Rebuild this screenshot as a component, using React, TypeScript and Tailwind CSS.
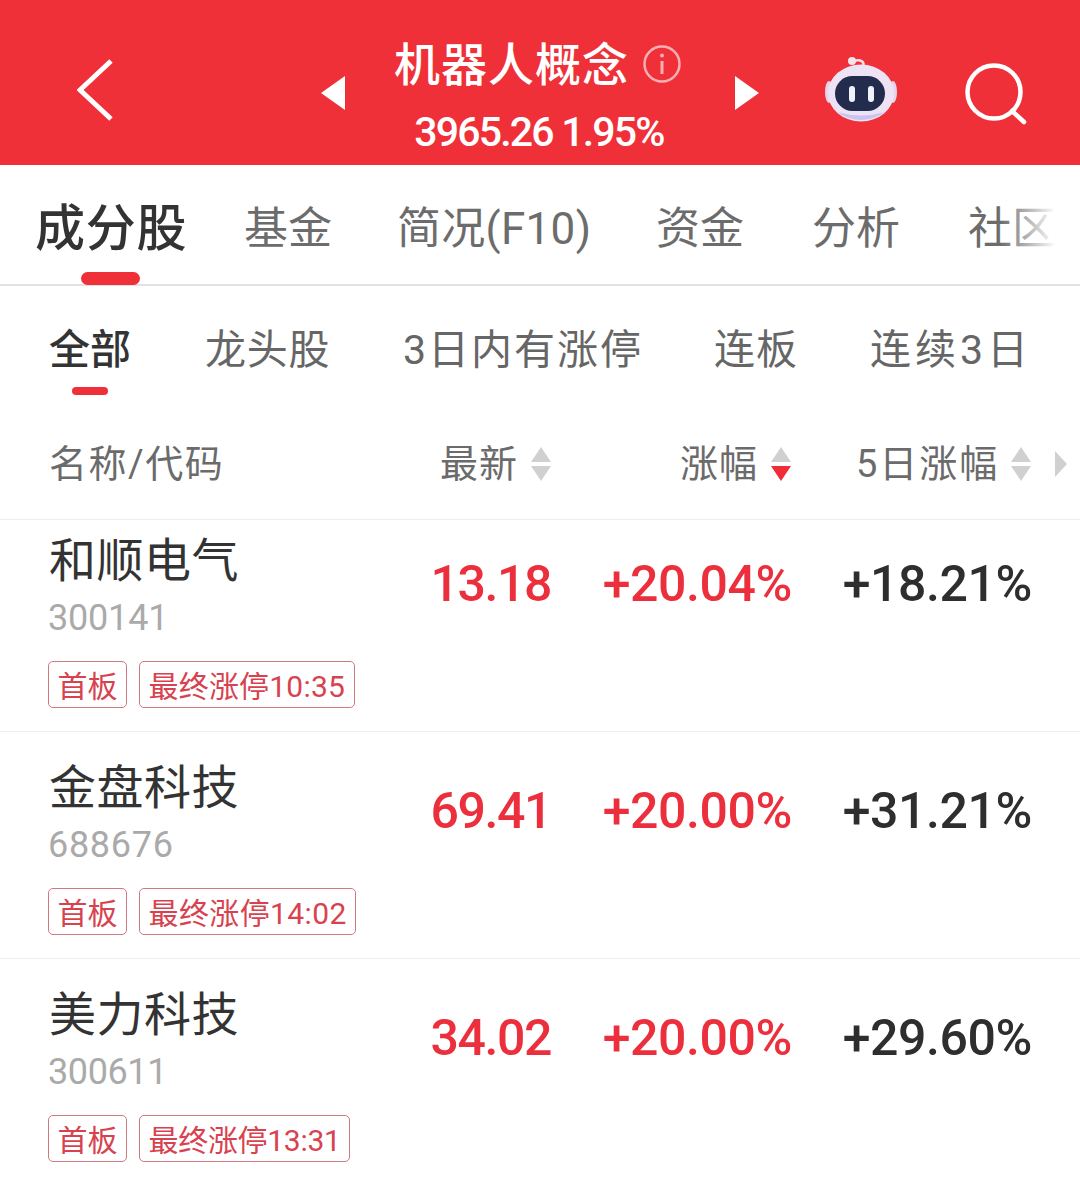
const font = "font-['Roboto','Noto_Sans_CJK_SC',sans-serif]";

const stocks = [
  { name: '和顺电气', code: '300141', codeClass: 'tracking-[-0.2px]', price: '13.18', change: '+20.04%', five: '+18.21%', limit: '最终涨停10:35', limitClass: 'tracking-[0.2px]', rowClass: 'h-[212px] pt-[13px]' },
  { name: '金盘科技', code: '688676', codeClass: 'tracking-[0.7px]', price: '69.41', change: '+20.00%', five: '+31.21%', limit: '最终涨停14:02', limitClass: 'tracking-[0.4px]', rowClass: 'h-[227px] pt-[28px]' },
  { name: '美力科技', code: '300611', codeClass: 'tracking-[-0.4px]', price: '34.02', change: '+20.00%', five: '+29.60%', limit: '最终涨停13:31', limitClass: 'tracking-[-0.3px]', rowClass: 'h-[219px] pt-[28px]' },
];

function SortCaret({ active = false }: { active?: boolean }) {
  return (
    <svg width="20" height="34" viewBox="0 0 20 34" className="shrink-0 block">
      <path d="M10 0 L20 15 L0 15 Z" fill="#d0d0d0" />
      <path d="M10 34 L20 19 L0 19 Z" fill={active ? '#f12b38' : '#d0d0d0'} />
    </svg>
  );
}

function Robot() {
  return (
    <svg width="72" height="66" viewBox="0 0 72 66" className="shrink-0 block">
      <path d="M29 5 C36 3 40 6 38 11" fill="none" stroke="#f3dce6" strokeWidth="2.5" />
      <circle cx="27" cy="5" r="4" fill="#f6e4ea" />
      <ellipse cx="4" cy="36" rx="4" ry="11" fill="#e8d4ea" />
      <ellipse cx="68" cy="36" rx="4" ry="11" fill="#e8d4ea" />
      <ellipse cx="36" cy="37" rx="33" ry="28.5" fill="#eee3f4" />
      <path d="M12 56 Q36 72 60 56 Q36 63 12 56 Z" fill="#c9c3f0" />
      <rect x="10" y="20" width="50" height="35" rx="17.5" fill="#232c4d" />
      <rect x="24" y="30" width="6" height="16" rx="3" fill="#eef3fb" />
      <rect x="43" y="30" width="6" height="16" rx="3" fill="#eef3fb" />
    </svg>
  );
}

export default function App() {
  return (
    <div className={`w-[1080px] h-[1177px] overflow-hidden bg-white ${font}`}>
      {/* Header */}
      <div className="h-[165px] bg-[#f03039] flex items-center pt-[18px] pl-[77px] text-white">
        <svg width="36" height="62" viewBox="0 0 36 62" fill="none" stroke="#fff" strokeWidth="5" className="shrink-0 mt-[-4px]">
          <path d="M34 2 L3 31 L34 60" />
        </svg>
        <div className="ml-[208px] w-0 h-0 border-y-[17px] border-y-transparent border-r-[24px] border-r-white mt-[2px]" />
        <div className="w-[390px] flex flex-col items-center mt-[12px]">
          <div className="flex items-center -ml-[4px] h-[60px] mt-[-4px]">
            <span className="text-[46px] leading-[60px] font-medium tracking-[1px]">机器人概念</span>
            <svg width="40" height="40" viewBox="0 0 40 40" fill="none" className="ml-[13px] mt-[-2px]">
              <circle cx="20" cy="20" r="17.5" stroke="#f8aeb3" strokeWidth="2.5" />
              <path d="M20 17 V30" stroke="#f8aeb3" strokeWidth="3" />
              <circle cx="20" cy="11.5" r="2" fill="#f8aeb3" />
            </svg>
          </div>
          <div className="text-[41px] leading-[50px] mt-[12px] mr-[2px] font-medium tracking-[-1.8px]">3965.26 1.95%</div>
        </div>
        <div className="w-0 h-0 border-y-[17px] border-y-transparent border-l-[24px] border-l-white mt-[2px]" />
        <div className="ml-[66px] mb-[6px]">
          <Robot />
        </div>
        <svg width="62" height="62" viewBox="0 0 62 62" fill="none" stroke="#fff" strokeWidth="4.5" className="ml-[68px] mt-[4px] shrink-0">
          <circle cx="29" cy="29" r="26.5" />
          <path d="M47 48 L59 59" strokeLinecap="round" />
        </svg>
      </div>

      {/* Tabs */}
      <div className="relative h-[121px] border-b-2 border-[#e2e2e2] flex items-center pl-[35px] pt-[9px] text-[44px] text-[#6c6c6c]">
        <span className="w-[153px] text-[50px] font-medium text-[#333] tracking-[0.7px] whitespace-nowrap">成分股</span>
        <span className="ml-[56px]">基金</span>
        <span className="ml-[65px] w-[194px] tracking-[0.3px] whitespace-nowrap">简况(F10)</span>
        <span className="ml-[65px]">资金</span>
        <span className="ml-[68px]">分析</span>
        <span className="ml-[68px] w-[88px] whitespace-nowrap">社区</span>
        <div className="absolute left-[1000px] top-[30px] w-[56px] h-[70px] bg-gradient-to-r from-transparent to-white" />
        <div className="absolute left-[81px] bottom-[-1px] w-[59px] h-[13px] rounded-full bg-[#f03039]" />
      </div>

      {/* Sub tabs */}
      <div className="relative h-[125px] flex items-center pl-[49px] pt-[5px] text-[41px] text-[#666]">
        <span className="font-medium text-[#333]">全部</span>
        <span className="ml-[74px] w-[125px] tracking-[0.7px] whitespace-nowrap">龙头股</span>
        <span className="ml-[73px] tracking-[2px]">3日内有涨停</span>
        <span className="ml-[71px] w-[84px] tracking-[1px] whitespace-nowrap">连板</span>
        <span className="ml-[72px] tracking-[4px]">连续3日</span>
        <div className="absolute left-[72px] top-[101px] w-[36px] h-[8px] rounded-full bg-[#f03039]" />
      </div>

      {/* Table head */}
      <div className="h-[109px] border-b border-[#eeeeee] pl-[49px] pb-[2px] flex items-center text-[38px] text-[#6b6b6b] bg-white">
        <span className="w-[391px] tracking-[1.5px] whitespace-nowrap">名称/代码</span>
        <span className="w-[77px] tracking-[1px] whitespace-nowrap">最新</span>
        <span className="ml-[14px]"><SortCaret /></span>
        <span className="ml-[129px] w-[76px] tracking-[1px] whitespace-nowrap">涨幅</span>
        <span className="ml-[15px]"><SortCaret active /></span>
        <span className="ml-[65px] w-[145px] tracking-[2px] whitespace-nowrap">5日涨幅</span>
        <span className="ml-[10px]"><SortCaret /></span>
        <svg width="12" height="26" viewBox="0 0 12 26" className="ml-[24px] shrink-0">
          <path d="M0 0 L12 13 L0 26 Z" fill="#d0d0d0" />
        </svg>
      </div>

      {/* Rows */}
      {stocks.map((s, i) => (
        <div
          key={s.code}
          className={`grid grid-cols-[1fr_170px_241px_240px] pl-[48px] pr-[48px] items-start ${s.rowClass} ${i < 2 ? 'border-b border-[#eeeeee]' : ''}`}
        >
          <div>
            <div className="pl-[1px] text-[47px] leading-[56px] text-[#333] tracking-[0.5px]">{s.name}</div>
            <div className={`mt-[4px] text-[36px] leading-[50px] text-[#aaaaaa] ${s.codeClass}`}>{s.code}</div>
            <div className="mt-[18px] flex gap-[12px] text-[30px] text-[#d8424f]">
              <span className="h-[47px] px-[8.5px] pt-[3px] flex items-center border border-[#cf7a80] rounded-[5px]">首板</span>
              <span className={`h-[47px] px-[8.5px] pt-[3px] flex items-center border border-[#cf7a80] rounded-[5px] whitespace-nowrap ${s.limitClass}`}>{s.limit}</span>
            </div>
          </div>
          <div className="mt-[21px] text-right text-[50px] leading-[60px] font-medium tracking-[-1.4px] text-[#ec2f3c]">{s.price}</div>
          <div className="mt-[21px] text-right text-[50px] leading-[60px] font-medium tracking-[-0.4px] text-[#ec2f3c]">{s.change}</div>
          <div className="mt-[21px] text-right text-[50px] leading-[60px] font-medium tracking-[-0.4px] text-[#2e2e2e]">{s.five}</div>
        </div>
      ))}
    </div>
  );
}
